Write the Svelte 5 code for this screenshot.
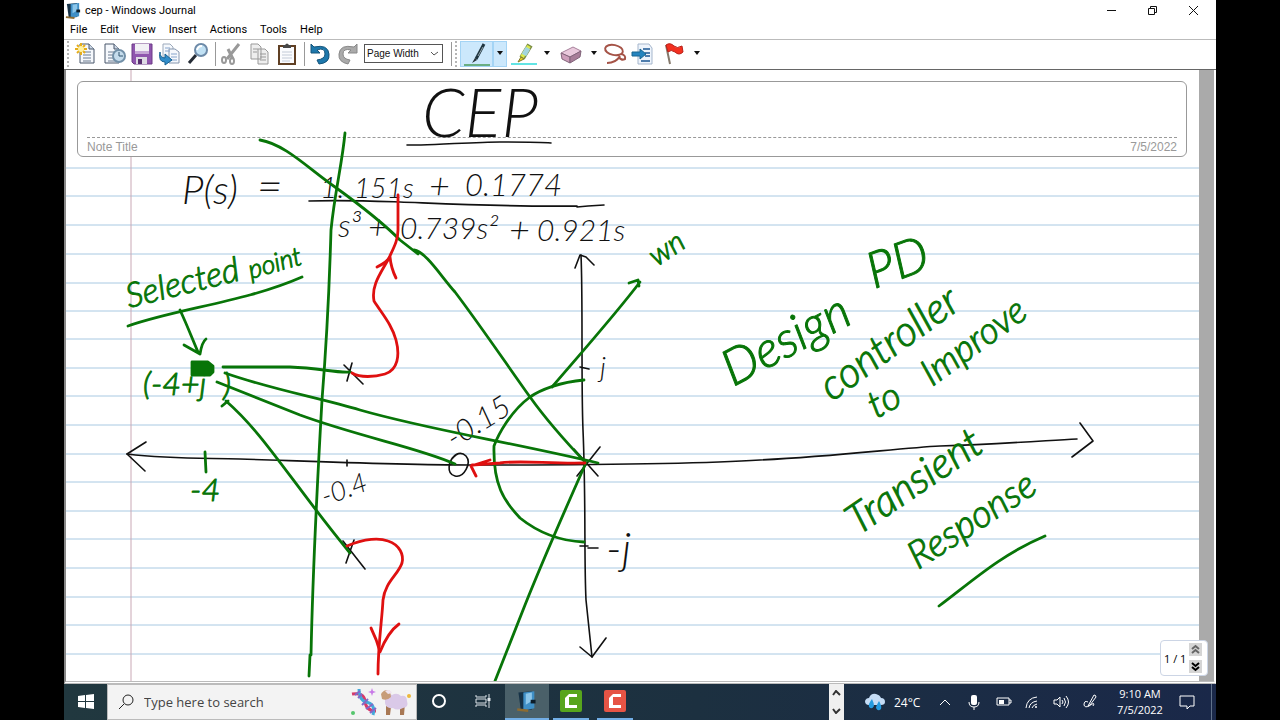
<script lang="ts">
	interface Word {
		text: string;
		x: number;
		y: number;
		size: number;
		turn: number;
	}

	const menus: string[] = ['File', 'Edit', 'View', 'Insert', 'Actions', 'Tools', 'Help'];
	const rules: number[] = [168, 196, 225, 254, 283, 311, 339, 368, 396, 425, 454, 482, 511, 539, 568, 597, 625, 654];

	let zoom = 'Page Width';
	let search = '';

	const blackWords: Word[] = [
		{ text: 'CEP', x: 422, y: 137, size: 68, turn: 0 },
		{ text: 'P(s)', x: 182, y: 204, size: 40, turn: 0 },
		{ text: '=', x: 257, y: 202, size: 44, turn: 0 },
		{ text: '1.', x: 320, y: 198, size: 30, turn: 0 },
		{ text: '151s', x: 354, y: 198, size: 28, turn: 0 },
		{ text: '+', x: 429, y: 199, size: 36, turn: 0 },
		{ text: '0.1774', x: 465, y: 196, size: 31, turn: 0 },
		{ text: 's³', x: 338, y: 237, size: 32, turn: 0 },
		{ text: '+', x: 368, y: 239, size: 34, turn: 0 },
		{ text: '0.739s²', x: 400, y: 239, size: 30, turn: 0 },
		{ text: '+', x: 509, y: 243, size: 36, turn: 0 },
		{ text: '0.921s', x: 537, y: 241, size: 30, turn: 0 },
		{ text: 'j', x: 600, y: 377, size: 28, turn: 0 },
		{ text: '-j', x: 606, y: 564, size: 44, turn: 0 },
		{ text: '-0.4', x: 325, y: 506, size: 27, turn: -20 },
		{ text: '-0.15', x: 454, y: 449, size: 30, turn: -32 }
	];

	const greenWords: Word[] = [
		{ text: 'Selected', x: 129, y: 308, size: 34, turn: -14 },
		{ text: 'point', x: 251, y: 279, size: 26, turn: -16 },
		{ text: '(-4+j', x: 143, y: 395, size: 32, turn: 0 },
		{ text: ')', x: 223, y: 396, size: 32, turn: 0 },
		{ text: '-4', x: 190, y: 501, size: 32, turn: 0 },
		{ text: 'wn', x: 657, y: 267, size: 30, turn: -34 },
		{ text: 'PD', x: 874, y: 289, size: 50, turn: -20 },
		{ text: 'Design', x: 733, y: 387, size: 50, turn: -28 },
		{ text: 'controller', x: 832, y: 402, size: 42, turn: -36 },
		{ text: 'to', x: 876, y: 419, size: 38, turn: -28 },
		{ text: 'Improve', x: 932, y: 387, size: 37, turn: -36 },
		{ text: 'Transient', x: 858, y: 536, size: 42, turn: -34 },
		{ text: 'Response', x: 918, y: 570, size: 38, turn: -33 }
	];

	const blackStrokes: string[] = [
		'M407 145H421C450 144 480 142 500 142S540 142 551 143',
		'M309 201C345 200 370 201 400 202S500 207 577 206M577 207L588 206 604 205',
		// real axis
		'M127 454C170 459 200 458 240 459C330 462 400 465 470 465C600 465 700 464 760 460C840 456 900 448 940 446C1000 444 1040 441 1077 439',
		'M146 442L127 454 145 471M1080 423L1093 441 1072 457',
		// imaginary axis
		'M581 255C583 300 581 380 583 430C586 500 584 560 586 600L592 657',
		'M575 268L580 255 586 257 594 265M580 647L592 657 606 638',
		'M347 460V466M580 367L589 369M580 546H588M588 548H598',
		// poles and zero
		'M344 365L363 384M352 363L347 381M343 541L365 569M354 540L346 563',
		'M574 449L598 476M600 447L577 476',
		'M456 455C448 460 446 474 455 476C464 478 472 463 466 456C461 451 455 454 453 458'
	];

	const greenStrokes: string[] = [
		'M345 133C342 165 335 190 331 230C329 300 326 350 322 400C318 470 313 560 311 655M310 655L309 676',
		'M260 140C285 144 310 170 335 187C360 205 380 220 400 240L418 254M414 250C426 252 440 275 455 292C480 325 505 362 530 397C545 418 566 442 586 463',
		'M585 465C565 510 545 555 525 605L495 681',
		'M584 380C560 382 540 390 530 397C510 412 498 435 494 446C493 485 504 501 520 518C540 534 560 541 584 542',
		'M552 387C575 360 615 315 640 282M629 283L638 280 639 286',
		'M225 373C270 389 320 398 360 410C430 430 500 440 598 463',
		'M217 382L300 415C360 437 420 448 455 464',
		'M223 367H290C320 368 335 373 350 372',
		'M222 406L228 401M226 401C265 435 290 480 350 553',
		'M128 326C180 308 245 302 302 277',
		'M180 310C187 325 192 338 198 352M184 345L200 354Q202 342 206 339',
		'M205 452L206 472',
		'M939 606C970 583 1000 555 1045 536'
	];

	const redStrokes: string[] = [
		'M585 463C550 464 520 460 500 463L472 465M490 460L471 466 476 476',
		'M352 373C360 378 375 377 385 374C398 370 400 355 396 340C392 325 383 315 374 301C371 285 381 273 389 258C394 247 398 240 398 230V195',
		'M377 267C383 264 388 261 390 257Q391 268 396 278',
		'M347 546C365 538 380 538 388 541C400 545 404 555 402 563C398 575 385 582 383 600C382 620 378 645 378 674',
		'M371 628Q377 640 380 652Q388 632 399 624'
	];
</script>

{#snippet journal()}
	<path d="M2 2L13 1V16L4 17Z" fill="#163247" />
	<path d="M6 2L15 1V15L6 17Z" fill="#3f8fc6" />
	<path d="M8 3L13 2V9L8 12Z" fill="#8cc6ea" />
	<path d="M12 8H16V11H12Z" fill="#0c1c28" />
	<path d="M1 16L10 17" stroke="#8c6b32" stroke-width="2" />
{/snippet}

{#snippet sheet()}
	<path d="M6 2H15L20 7V21H6Z" fill="#f5f8fc" stroke="#49576b" />
	<path d="M15 2V7H20" fill="#ccd7e5" stroke="#49576b" />
	<path d="M9 10H17M9 13H17M9 16H17M9 19H17" stroke="#6d7c91" />
{/snippet}

{#snippet drop()}
	<svg width="8" height="5" viewBox="0 0 8 5"><path d="M1 0H7L4 4Z" fill="#111" /></svg>
{/snippet}

{#snippet handwriting(words: Word[])}
	{#each words as word}
		<text x={word.x} y={word.y} font-size={word.size} transform="rotate({word.turn} {word.x} {word.y})">{word.text}</text>
	{/each}
{/snippet}

<div class="screen">
	<header class="titlebar">
		<svg width="17" height="17" viewBox="0 0 18 18">{@render journal()}</svg>
		<h1>cep - Windows Journal</h1>
		<div class="window-buttons">
			<button aria-label="Minimize"><svg width="11" height="11"><path d="M1 5.5H10" /></svg></button>
			<button aria-label="Restore"><svg width="11" height="11"><path d="M1.5 3.5H7.5V9.5H1.5ZM3.5 3V1.5H9.5V7.5H8" /></svg></button>
			<button aria-label="Close"><svg width="11" height="11"><path d="M1 1L10 10M10 1L1 10" /></svg></button>
		</div>
	</header>

	<nav class="menubar">
		{#each menus as menu}
			<button>{menu}</button>
		{/each}
	</nav>

	<div class="toolbar">
		<span class="grip"></span>
		<button aria-label="New note">
			<svg width="24" height="24" viewBox="0 0 24 24">
				{@render sheet()}
				<path d="M7 1V13M1 7H13M3 3L11 11M11 3L3 11" stroke="#e5ad1c" stroke-width="2" />
				<circle cx="7" cy="7" r="3" fill="#fff2a0" />
			</svg>
		</button>
		<button aria-label="Note from template">
			<svg width="24" height="24" viewBox="0 0 24 24">
				<g transform="translate(-3)">{@render sheet()}</g>
				<circle cx="17" cy="14" r="6" fill="#c5dcec" stroke="#7290a8" stroke-width="2" />
				<path d="M17 10V14H21" fill="none" stroke="#31546f" />
			</svg>
		</button>
		<button aria-label="Save">
			<svg width="24" height="24" viewBox="0 0 24 24">
				<path d="M2 2H22V22H4L2 20Z" fill="#8f55ae" stroke="#6c3b87" />
				<path d="M5 2H19V11H5Z" fill="#f2f1f5" />
				<path d="M5 9H19V12H5Z" fill="#c5a6d6" />
				<path d="M6 15H17V22H6Z" fill="#dedbe4" />
				<path d="M8 17H12V22H8Z" fill="#583170" />
			</svg>
		</button>
		<button aria-label="Import">
			<svg width="24" height="24" viewBox="0 0 24 24">
				<path d="M5 2H12L15 5V16H5Z" fill="#f5f8fc" stroke="#9ca9bb" />
				<path d="M11 7H17L21 10V21H11Z" fill="#f5f8fc" stroke="#8596ae" />
				<path d="M7 6H12M7 9H12M13 12H19M13 15H19M13 18H19" stroke="#86a4cc" />
				<path d="M2 10Q2 16 7 16V12L14 18L7 23V20Q0 20 2 10Z" fill="#328dca" stroke="#176192" />
			</svg>
		</button>
		<button aria-label="Find">
			<svg width="24" height="24" viewBox="0 0 24 24">
				<path d="M10 13L3 21" stroke="#252c35" stroke-width="3" />
				<circle cx="15" cy="8" r="6" fill="#c1e1f4" stroke="#6d8aa8" stroke-width="2" />
				<path d="M11 8Q12 4 16 4" fill="none" stroke="#fff" stroke-width="2" />
			</svg>
		</button>
		<span class="divider"></span>
		<button aria-label="Cut">
			<svg width="24" height="24" viewBox="0 0 24 24" fill="none" stroke="#999">
				<path d="M20 2L8 17M9 7L14 17" stroke-width="3" />
				<ellipse cx="5" cy="18" rx="2" ry="3" stroke-width="2" />
				<ellipse cx="13" cy="19" rx="2" ry="3" stroke-width="2" />
			</svg>
		</button>
		<button aria-label="Copy">
			<svg width="24" height="24" viewBox="0 0 24 24" fill="#eee" stroke="#999">
				<path d="M4 2H11L14 5V17H4ZM11 7H18L21 10V22H11Z" />
				<path d="M6 7H11M6 10H10M13 12H19M13 15H19M13 18H19" />
			</svg>
		</button>
		<button aria-label="Paste">
			<svg width="24" height="24" viewBox="0 0 24 24">
				<path d="M4 4H20V22H4Z" fill="#fafbfe" stroke="#604024" stroke-width="2" />
				<path d="M8 6V3H10Q12 0 14 3H16V6Z" fill="#474747" />
				<path d="M7 10H17M7 13H17M7 16H17M7 19H15" stroke="#c2cad7" />
			</svg>
		</button>
		<span class="divider"></span>
		<button aria-label="Undo">
			<svg width="24" height="24" viewBox="0 0 24 24"><path d="M3 2V11H12L9 8Q17 5 17 12Q17 17 9 18L11 22Q22 21 21 12Q20 2 6 5Z" fill="#1d78ac" stroke="#15547a" /></svg>
		</button>
		<button aria-label="Redo">
			<svg width="24" height="24" viewBox="0 0 24 24"><path d="M21 2V11H12L15 8Q7 6 7 12Q7 17 14 18L12 22Q2 20 3 12Q4 2 18 5Z" fill="#aaa" stroke="#888" /></svg>
		</button>
		<label class="zoom">
			<select bind:value={zoom} aria-label="Zoom">
				<option>Page Width</option>
			</select>
			<svg width="9" height="6" viewBox="0 0 9 6"><path d="M1 1L4 4L8 1" fill="none" stroke="#555" /></svg>
		</label>
		<span class="divider wide"></span>
		<span class="grip"></span>
		<button class="tool active" aria-label="Pen">
			<svg width="28" height="24" viewBox="0 0 28 24">
				<path d="M1 23H27" stroke="#087508" />
				<path d="M21 2L13 17" stroke="#1f3541" stroke-width="3" />
				<path d="M20 5L15 14" stroke="#91a4ad" />
				<path d="M12 16L9 21L14 18Z" fill="#263238" />
			</svg>
		</button>
		<button class="drop active" aria-label="Pen styles">{@render drop()}</button>
		<button class="tool" aria-label="Highlighter">
			<svg width="28" height="24" viewBox="0 0 28 24">
				<path d="M1 22H27" stroke="#62e4e4" stroke-width="2" />
				<path d="M20 3L12 16" stroke="#7b8e43" stroke-width="6" />
				<path d="M19 4L12 15" stroke="#dbea4d" stroke-width="4" />
				<path d="M18 6L14 13" stroke="#a2d5de" stroke-width="5" />
				<path d="M11 15L8 20L14 17Z" fill="#e8d325" stroke="#837a29" />
			</svg>
		</button>
		<button class="drop" aria-label="Highlighter styles">{@render drop()}</button>
		<button class="tool" aria-label="Eraser">
			<svg width="24" height="24" viewBox="0 0 24 24">
				<path d="M2 11L14 5L22 9L11 15Z" fill="#e9c9dc" stroke="#a6819b" />
				<path d="M2 11L11 15V21L3 17Z" fill="#ce9fbb" stroke="#81647a" />
				<path d="M11 15L22 9L21 15L11 21Z" fill="#a77d98" stroke="#81647a" />
			</svg>
		</button>
		<button class="drop" aria-label="Eraser sizes">{@render drop()}</button>
		<button aria-label="Selection tool">
			<svg width="24" height="24" viewBox="0 0 24 24" fill="none" stroke="#a55347" stroke-width="2">
				<ellipse cx="11" cy="8" rx="9" ry="5" transform="rotate(12 11 8)" />
				<path d="M18 12Q23 13 22 17Q18 19 16 15M17 14Q13 21 4 21" />
			</svg>
		</button>
		<button aria-label="Insert space">
			<svg width="24" height="24" viewBox="0 0 24 24">
				<path d="M7 2H18L21 6V22H7Z" fill="#eef4fc" stroke="#a5b6cc" />
				<path d="M12 7H19M14 11H19M14 14H19M10 19H19" stroke="#4f7dad" stroke-width="2" />
				<path d="M1 10H9V7L15 12L9 17V14H1Z" fill="#2584bf" stroke="#176490" />
			</svg>
		</button>
		<button class="tool" aria-label="Flag">
			<svg width="24" height="24" viewBox="0 0 24 24">
				<path d="M4 3L8 22" stroke="#85796c" stroke-width="2" />
				<path d="M4 3Q8 0 12 4Q15 7 20 4L21 10Q17 14 13 10Q9 7 6 10Z" fill="#f3301f" stroke="#b92018" />
			</svg>
		</button>
		<button class="drop" aria-label="Flag colors">{@render drop()}</button>
	</div>

	<main>
		<div class="note">
			<svg class="ruling" viewBox="66 70 1133 611" preserveAspectRatio="xMinYMin slice">
				{#each rules as y}
					<line x1="66" x2="1199" y1={y} y2={y} />
				{/each}
				<path d="M131 70V681" />
			</svg>
			<section class="note-header">
				<div class="note-title"></div>
				<div class="note-caption">
					<span>Note Title</span>
					<time>7/5/2022</time>
				</div>
			</section>
			<svg class="ink" viewBox="66 70 1133 611" preserveAspectRatio="xMinYMin meet">
				<g class="black" stroke-width="1.6">
					{#each blackStrokes as d}<path {d} />{/each}
					{@render handwriting(blackWords)}
				</g>
				<g class="green" stroke-width="2.8">
					{#each greenStrokes as d}<path {d} />{/each}
					<path class="block" d="M192 362H208L213 366V372L210 375H192Z" />
					{@render handwriting(greenWords)}
				</g>
				<g class="red" stroke-width="2.8">
					{#each redStrokes as d}<path {d} />{/each}
				</g>
			</svg>
		</div>
		<div class="pager">
			<span>1 / 1</span>
			<div class="pager-buttons">
				<button aria-label="Previous page"><svg width="11" height="11"><path d="M2 5L5.5 2L9 5M2 9L5.5 6L9 9" stroke="#666" /></svg></button>
				<button aria-label="Next page"><svg width="11" height="11"><path d="M2 2L5.5 5L9 2M2 6L5.5 9L9 6" stroke="#000" /></svg></button>
			</div>
		</div>
	</main>

	<footer class="taskbar">
		<button class="start" aria-label="Start">
			<svg width="16" height="16" viewBox="0 0 16 16" fill="#fff"><path d="M0 2L7 1V7H0ZM8 1L16 0V7H8ZM0 8H7V14L0 13ZM8 8H16V15L8 14Z" /></svg>
		</button>
		<label class="search">
			<svg width="16" height="16" viewBox="0 0 16 16" fill="none" stroke="#222"><circle cx="10" cy="6" r="5" /><path d="M6 10L1 15" /></svg>
			<input type="text" placeholder="Type here to search" bind:value={search} />
			<svg width="64" height="30" viewBox="0 0 64 30" fill="none">
				<path d="M4 7Q16 5 17 14Q18 24 28 24" stroke="#d63a69" stroke-width="3" />
				<path d="M11 2Q11 13 18 15Q28 17 25 28" stroke="#43a9da" stroke-width="3" />
				<path d="M7 8L12 4M10 11L14 7M14 18L20 12M18 22L25 17M22 26L28 21" stroke="#8467c7" stroke-width="2" />
				<path d="M24 1L25 4L28 5L25 6L24 9L23 6L20 5L23 4Z" fill="#c879e8" />
				<circle cx="5" cy="26" r="2" fill="#55c66d" />
				<path d="M38 19V28H42L43 20M52 19V28H56L57 16" fill="#a87854" />
				<path d="M37 10Q40 5 44 8Q49 5 53 9Q59 8 59 14Q61 20 55 21Q49 24 45 21Q38 22 37 16Z" fill="#dac9e8" />
				<path d="M33 7Q37 1 42 4L43 10Q39 14 34 12Z" fill="#c79c78" />
				<path d="M37 4Q42 1 44 6L40 7Z" fill="#efe3ee" />
				<circle cx="61" cy="9" r="2" fill="#edb83c" />
			</svg>
		</label>
		<button class="app" aria-label="Cortana"><svg width="16" height="16"><circle cx="8" cy="8" r="6" fill="none" stroke="#fff" stroke-width="2" /></svg></button>
		<button class="app" aria-label="Task view">
			<svg width="16" height="16" fill="none" stroke="#dce3e8"><path d="M1 2V4H11V2M1 14V12H11V14M1 6H11V10H1ZM14 1V15" /><path d="M14 5V8" stroke-width="3" /></svg>
		</button>
		<button class="app current" aria-label="Windows Journal"><svg width="22" height="22" viewBox="0 0 18 18">{@render journal()}</svg></button>
		<button class="app running" aria-label="Camtasia">
			<svg width="22" height="22"><rect width="22" height="22" rx="2" fill="#57a51c" /><path d="M17 4H9L5 8V18H17V15H9V7H17Z" fill="#fff" /></svg>
		</button>
		<button class="app running" aria-label="Camtasia Recorder">
			<svg width="22" height="22"><rect width="22" height="22" rx="2" fill="#e65445" /><path d="M17 4H9L5 8V18H17V15H9V7H17Z" fill="#fff" /></svg>
		</button>
		<div class="scroller">
			<button aria-label="Scroll up"><svg width="9" height="6"><path d="M1 5L4 1L8 5" /></svg></button>
			<button aria-label="Scroll down"><svg width="9" height="6"><path d="M1 1L4 5L8 1" /></svg></button>
		</div>
		<div class="tray">
			<button class="weather">
				<svg width="22" height="20" viewBox="0 0 22 20">
					<path d="M5 13Q1 13 1 9Q2 6 5 6Q7 1 12 2Q16 3 17 6Q21 6 21 10Q21 13 17 13Z" />
					<path d="M8 7Q4 12 5 15Q8 18 10 14Q10 11 8 7ZM15 9Q12 14 12 16Q14 20 17 17Q18 14 15 9Z" />
				</svg>
				<span>24°C</span>
			</button>
			<button aria-label="Hidden icons"><svg width="18" height="18"><path d="M4 12L9 7L14 12" /></svg></button>
			<button aria-label="Microphone"><svg width="18" height="18"><rect x="6" y="2" width="6" height="10" rx="2" fill="#fff" /><path d="M4 9Q4 14 9 14Q14 14 14 9M9 14V17" /></svg></button>
			<button aria-label="Battery"><svg width="18" height="18"><path d="M3 5H15V12H3ZM15 7H17V10H15" /><rect x="5" y="7" width="5" height="4" fill="#fff" /></svg></button>
			<button aria-label="Network"><svg width="18" height="18"><path d="M3 15Q4 5 14 4M6 15Q7 9 14 8M9 15Q10 12 14 11" /><circle cx="13" cy="14" r="1" fill="#fff" /></svg></button>
			<button aria-label="Volume"><svg width="18" height="18"><path d="M2 7H5L8 4V14L5 11H2ZM10 7Q12 9 10 11M12 5Q15 9 12 13M14 3Q19 9 14 15" /></svg></button>
			<button aria-label="Windows Ink"><svg width="18" height="18"><path d="M7 9Q3 7 3 12Q4 15 8 13Q15 8 12 13M7 13L13 2Q15 2 15 4L9 12Z" /></svg></button>
			<button class="clock"><time>9:10 AM</time><time>7/5/2022</time></button>
			<button aria-label="Notifications"><svg width="18" height="18"><path d="M2 3H16V13H12L9 16V13H2Z" /></svg></button>
			<span class="peek"></span>
		</div>
	</footer>
</div>

<style>
	:global(body) {
		background: #000;
		font-family: "Open Sans", "Noto Sans", sans-serif;
	}

	button {
		display: flex;
		align-items: center;
		justify-content: center;
		margin: 0;
		padding: 0;
		border: 0;
		background: none;
		color: inherit;
		font: inherit;
	}

	svg {
		flex: none;
	}

	.screen {
		display: flex;
		flex-direction: column;
		min-height: 100vh;
		margin: 0 5%;
		background: #fff;
	}

	.titlebar {
		display: flex;
		align-items: center;
		gap: 3px;
		height: 20px;
		padding: 0 2px 0 1px;
	}

	h1 {
		margin: 0;
		font: 11px Roboto, sans-serif;
	}

	.window-buttons {
		display: flex;
		margin-left: auto;
	}

	.window-buttons button {
		width: 41px;
		height: 20px;
	}

	.window-buttons path {
		fill: none;
		stroke: #111;
	}

	.menubar {
		display: flex;
		align-items: center;
		gap: 13px;
		height: 19px;
		padding: 0 6px;
		font: 11px Roboto, sans-serif;
	}

	.toolbar {
		display: flex;
		align-items: center;
		height: 27px;
		padding: 0 0 2px 3px;
		border-top: 1px solid #bbb;
		border-bottom: 1px solid #666;
	}

	.toolbar button {
		width: 28px;
		height: 26px;
	}

	.toolbar .tool {
		width: 33px;
	}

	.toolbar .drop {
		width: 14px;
	}

	.toolbar .active {
		background: #cce8fc;
		box-shadow: inset 0 0 0 1px #a4d4f5;
	}

	.grip {
		width: 2px;
		height: 26px;
		margin-right: 3px;
		background: repeating-linear-gradient(#b5b5b5 0 2px, #fff 2px 4px);
	}

	.divider {
		width: 1px;
		height: 24px;
		margin: 0 1px 0 3px;
		background: #999;
	}

	.divider.wide {
		margin: 0 3px 0 8px;
	}

	.zoom {
		display: flex;
		align-items: center;
		box-sizing: border-box;
		width: 79px;
		height: 19px;
		margin-left: 2px;
		padding: 0 3px 0 2px;
		border: 1px solid #555;
	}

	select {
		flex: 1;
		min-width: 0;
		padding: 0;
		border: 0;
		appearance: none;
		background: none;
		color: #111;
		font: 10px "Liberation Sans", Arial, sans-serif;
	}

	main {
		position: relative;
		display: flex;
		flex: 1;
		border-left: 2px solid #888;
		border-right: 2px solid #fff;
		border-bottom: 3px double #bbb;
	}

	.note {
		position: relative;
		flex: 1;
		min-height: 560px;
		padding: 11px 12px 0 11px;
		border-right: 15px solid #aaa;
	}

	.ruling,
	.ink {
		position: absolute;
		inset: 0;
		width: 100%;
		height: 100%;
	}

	.ruling line {
		stroke: #a8c9e2;
	}

	.ruling path {
		stroke: #c9a8b5;
	}

	.note-header {
		position: relative;
		box-sizing: border-box;
		height: 76px;
		padding: 0 9px;
		border: 1px solid #999;
		border-radius: 6px;
		background: #fff;
		color: #999;
		font: 12px/18px "Liberation Sans", Arial, sans-serif;
	}

	.note-title {
		height: 55px;
		border-bottom: 1px dashed #999;
	}

	.note-caption {
		display: flex;
		justify-content: space-between;
	}

	.ink {
		fill: none;
		stroke-linecap: round;
		stroke-linejoin: round;
		font-family: Lato, sans-serif;
		font-style: italic;
		font-weight: 300;
	}

	.black {
		stroke: #111;
	}

	.black text {
		fill: #111;
		stroke: none;
	}

	.green {
		stroke: #087508;
	}

	.green text {
		fill: #087508;
		stroke-width: 1px;
	}

	.block {
		fill: #087508;
	}

	.red {
		stroke: #df1010;
	}

	.pager {
		position: absolute;
		right: 6px;
		bottom: 5px;
		display: flex;
		align-items: center;
		justify-content: space-between;
		box-sizing: border-box;
		width: 48px;
		height: 36px;
		padding: 0 5px 0 3px;
		border: 1px solid #ccd5e5;
		border-radius: 4px;
		background: #fff;
		font-size: 11px;
	}

	.pager-buttons {
		display: flex;
		flex-direction: column;
		gap: 4px;
	}

	.pager button {
		width: 13px;
		height: 13px;
		background: #d5d5d5;
	}

	.pager path {
		fill: none;
		stroke-width: 2;
	}

	.taskbar {
		display: flex;
		height: 36px;
		background: linear-gradient(90deg, #21383f, #1c3040 55%, #1a2849);
		color: #fff;
	}

	.start {
		width: 43px;
	}

	.search {
		display: flex;
		align-items: center;
		box-sizing: border-box;
		width: 310px;
		padding: 0 4px 0 10px;
		border: 1px solid #bbb;
		background: #f3f3f3;
	}

	input {
		flex: 1;
		min-width: 0;
		padding: 0 0 0 10px;
		border: 0;
		outline: 0;
		background: none;
		color: #222;
		font: 13px "Open Sans", "Noto Sans", sans-serif;
	}

	input::placeholder {
		color: #444;
	}

	.app {
		width: 44px;
		border-bottom: 2px solid transparent;
	}

	.app.current {
		background: #4a6069;
		border-color: #72aee6;
	}

	.app.running {
		width: 36px;
		margin: 0 4px;
		border-color: #72aee6;
	}

	.scroller {
		display: flex;
		flex-direction: column;
		width: 15px;
		margin-left: auto;
		background: #f0f0f0;
	}

	.scroller button {
		flex: 1;
	}

	.scroller path {
		fill: none;
		stroke: #333;
		stroke-width: 2;
	}

	.tray {
		display: flex;
		align-items: center;
		padding-left: 20px;
		font-size: 12px;
	}

	.tray button {
		width: 29px;
		height: 36px;
	}

	.tray button path {
		fill: none;
		stroke: #fff;
	}

	.tray .weather {
		gap: 8px;
		width: 66px;
		justify-content: flex-start;
	}

	.tray .weather path:first-child {
		fill: #c4dcf5;
		stroke: none;
	}

	.tray .weather path:last-child {
		fill: #239be0;
		stroke: none;
	}

	.tray .clock {
		flex-direction: column;
		width: 64px;
		margin-left: 4px;
		font-size: 11px;
		line-height: 16px;
	}

	.peek {
		width: 1px;
		height: 36px;
		margin: 0 4px 0 10px;
		background: #60718a;
	}
</style>
